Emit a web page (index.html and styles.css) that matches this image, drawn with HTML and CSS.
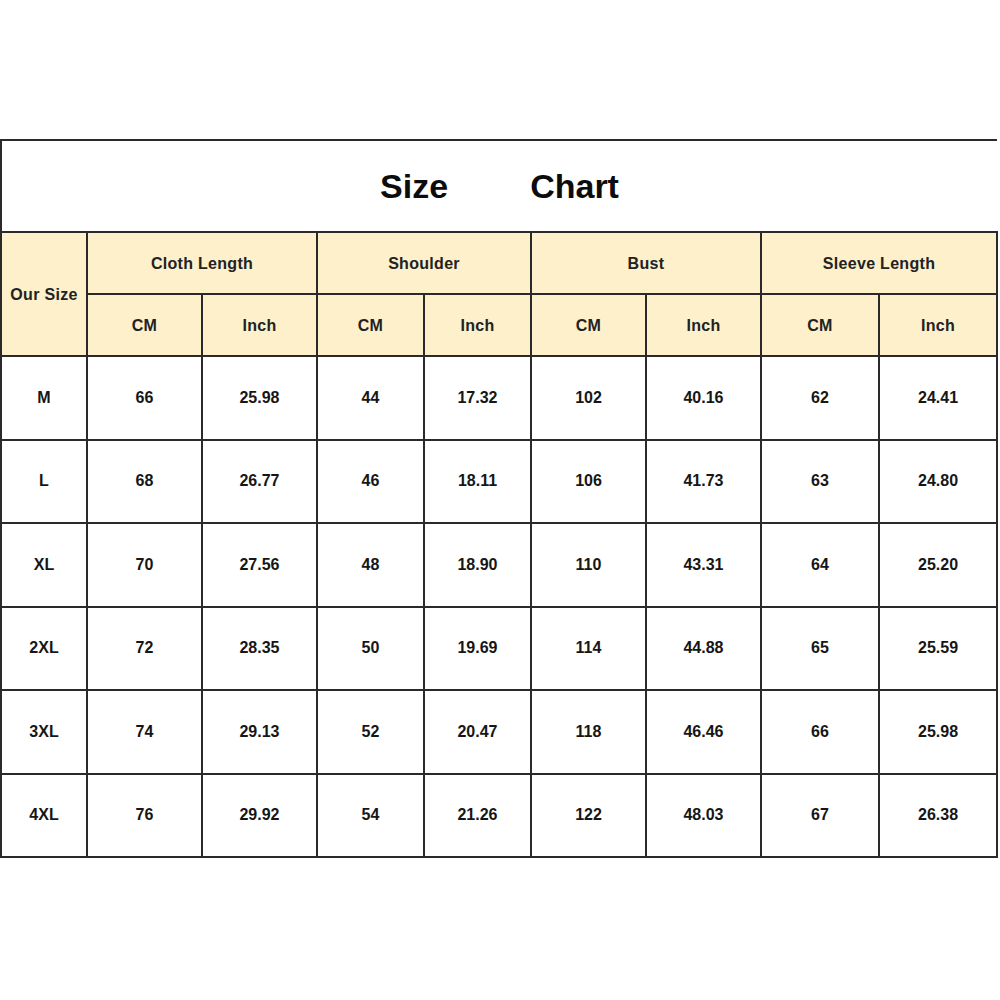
FILE: index.html
```html
<!DOCTYPE html>
<html>
<head>
<meta charset="utf-8">
<link rel="stylesheet" href="styles.css">
</head>
<body>
<div class="page">
<table class="chart">
  <colgroup>
    <col class="c-size">
    <col class="c-a"><col class="c-a">
    <col class="c-b"><col class="c-b">
    <col class="c-a"><col class="c-a">
    <col class="c-c"><col class="c-c">
  </colgroup>
  <tr class="title-row">
    <td colspan="9" class="title"><span>Size</span><span>Chart</span></td>
  </tr>
  <tr class="head-row">
    <th rowspan="2" class="head">Our Size</th>
    <th colspan="2" class="head">Cloth Length</th>
    <th colspan="2" class="head">Shoulder</th>
    <th colspan="2" class="head">Bust</th>
    <th colspan="2" class="head">Sleeve Length</th>
  </tr>
  <tr class="head-row">
    <th class="head">CM</th><th class="head">Inch</th>
    <th class="head">CM</th><th class="head">Inch</th>
    <th class="head">CM</th><th class="head">Inch</th>
    <th class="head">CM</th><th class="head">Inch</th>
  </tr>
  <tr class="data-row"><td>M</td><td>66</td><td>25.98</td><td>44</td><td>17.32</td><td>102</td><td>40.16</td><td>62</td><td>24.41</td></tr>
  <tr class="data-row"><td>L</td><td>68</td><td>26.77</td><td>46</td><td>18.11</td><td>106</td><td>41.73</td><td>63</td><td>24.80</td></tr>
  <tr class="data-row"><td>XL</td><td>70</td><td>27.56</td><td>48</td><td>18.90</td><td>110</td><td>43.31</td><td>64</td><td>25.20</td></tr>
  <tr class="data-row"><td>2XL</td><td>72</td><td>28.35</td><td>50</td><td>19.69</td><td>114</td><td>44.88</td><td>65</td><td>25.59</td></tr>
  <tr class="data-row"><td>3XL</td><td>74</td><td>29.13</td><td>52</td><td>20.47</td><td>118</td><td>46.46</td><td>66</td><td>25.98</td></tr>
  <tr class="data-row"><td>4XL</td><td>76</td><td>29.92</td><td>54</td><td>21.26</td><td>122</td><td>48.03</td><td>67</td><td>26.38</td></tr>
</table>
</div>
</body>
</html>
```

FILE: styles.css
```css
html, body {
  margin: 0;
  padding: 0;
  background: #fff;
}
.page {
  padding-top: 139px;
}
.chart {
  border-collapse: collapse;
  table-layout: fixed;
  width: 998px;
  font-family: "Liberation Sans", Arial, sans-serif;
  font-weight: bold;
  color: #161616;
}
.c-size { width: 86px; }
.c-a { width: 115px; }
.c-b { width: 107px; }
.c-c { width: 118px; }
.chart td, .chart th {
  border: 2px solid #2a2a2a;
  text-align: center;
  vertical-align: middle;
  padding: 0;
  font-size: 16px;
  font-weight: bold;
}
.chart td.title {
  border-right: none;
  height: 90px;
  font-size: 34px;
  color: #0c0c0c;
}
.title span + span {
  margin-left: 82px;
}
.head-row th {
  height: 58px;
  background: #fdf0cb;
  color: #222;
  letter-spacing: 0.3px;
  padding-top: 2px;
}
.data-row td {
  height: 81.5px;
}
```
